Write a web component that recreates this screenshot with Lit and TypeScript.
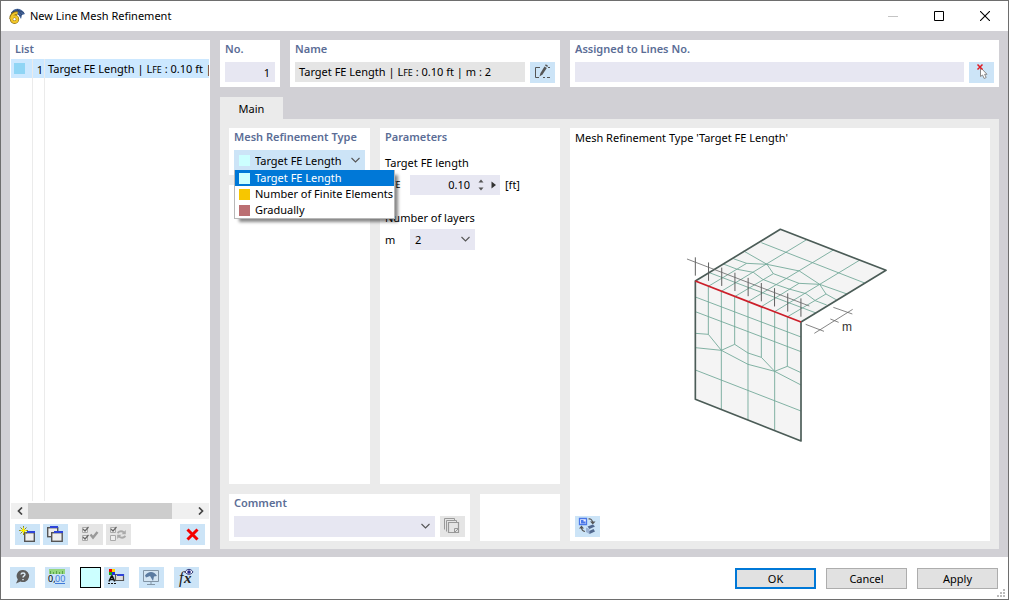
import { LitElement, html, css, svg } from "lit";
import { customElement, state } from "lit/decorators.js";

const chevron = html`<svg class="chevron" width="11" height="7" viewBox="0 0 11 7" aria-hidden="true">
  <path d="M1.500 1l4 4 4-4" fill="none" stroke="#555" stroke-width="1.100" />
</svg>`;

const icon = (body: unknown) =>
  html`<svg width="25" height="21" viewBox="0 0 25 21" aria-hidden="true">${body}</svg>`;

const icons = {
  edit: icon(svg`<path d="M10 5.500H5.500v10H9M13 15.500h2M17 15.500h3M18 5.500h2" fill="none" stroke="#555"/>
    <path d="M9.500 14.500l1-3.500 4-6.500 2.300 1.500-4.300 6.500z" fill="#555"/><path d="M15 3.500l.800-1.200 2.200 1.400-.700 1.300z" fill="#555"/>`),
  pick: icon(svg`<path d="M11.500 5.500v9l2-1.500 1.700 3.500 2-1-1.600-3.200h2.400z" fill="#fff" stroke="#888"/>
    <path d="M8.500 2.500l5 5M13.500 2.500l-5 5" stroke="#e01b24" stroke-width="1.500"/>`),
  create: icon(svg`<rect x="9.700" y="8.700" width="9.600" height="8.600" fill="#eee" stroke="#555" stroke-width="1.400"/>
    <path d="M12 7h8v2h-8z" fill="#2f45d8"/>
    <path d="M8.500 2v9M4 6.500h9M5.500 3.500l6 6M11.500 3.500l-6 6" stroke="#8d8a20" stroke-width="1"/>
    <path d="M8.500 3l1 2.500 2.500 1-2.500 1-1 2.500-1-2.500-2.500-1 2.500-1z" fill="#fff200"/>`),
  copy: icon(svg`<rect x="4.700" y="3.700" width="10" height="9" fill="#eee" stroke="#555" stroke-width="1.400"/>
    <path d="M7 2h8v2H7z" fill="#2f45d8"/>
    <rect x="8.700" y="8.700" width="10.500" height="8.600" fill="#eee" stroke="#555" stroke-width="1.400"/>
    <path d="M11 7h9v2h-9z" fill="#2f45d8"/>`),
  checkAll: icon(svg`<path d="M4.500 3.500h5v5h-5zM4.500 11.500h5v5h-5z" fill="#eee" stroke="#aaa"/>
    <path d="M5 5l2 2 3.500-4M5 13l2 2 3.500-4" fill="none" stroke="#666" stroke-width="1.200"/>
    <path d="M12.500 10.500l2.500 3 4.500-5.500" fill="none" stroke="#999" stroke-width="2.400"/>`),
  toggleAll: icon(svg`<path d="M4.500 3.500h5v5h-5zM4.500 11.500h5v5h-5z" fill="#eee" stroke="#aaa"/>
    <path d="M5 5l2 2 3.500-4" fill="none" stroke="#666" stroke-width="1.200"/>
    <path d="M11.500 9c2-2 4-2.500 6.500-.500M19.500 12c-2 2-4 2.500-6.500.500" fill="none" stroke="#aaa" stroke-width="1.800"/>
    <path d="M19.800 6v4.200h-4.200zM11.200 15v-4.200h4.200z" fill="#aaa"/>`),
  remove: icon(svg`<path d="M7.500 5.500l10 10M17.500 5.500l-10 10" stroke="#f40000" stroke-width="3"/>`),
  library: icon(svg`<path d="M4.500 13.500v-11h10v2M6.500 15.500v-11h10v2" fill="none" stroke="#999"/>
    <path d="M8.500 6.500h10v10h-10z" fill="none" stroke="#999" stroke-width="1.200"/><path d="M14.500 12.500h4v4h-4zM15 16l3-3" fill="none" stroke="#999"/>`),
  view: icon(svg`<path d="M4.500 2.500h7v6h-7z" fill="#eef" stroke="#4a78e8" stroke-width="1.300"/><path d="M6 4h2.500v1.500h2V7.500H6z" fill="#4a78e8"/>
    <path d="M13.500 3c2-.500 3.500.500 4 3M6.500 11c0 3 1 4 3.500 4.500" fill="none" stroke="#555" stroke-width="1.200"/>
    <path d="M15 5.500h5.500l-2.700 3zM4 12.500L6.500 9.500 9 12.500z" fill="#555"/>
    <path d="M12.500 10.500l5.500-2 2 2-5.500 2.500zM13 15.500l5.500-2.500 1.500 2.500-5.500 2.500z" fill="#52698f"/><path d="M11 11.500l3.500 1.500v5l-3.500-2z" fill="#9bb2d4"/>`),
  help: icon(svg`<path d="M13 3a6 6 0 1 1-2.500 11.400L6 16.500l1.800-4A6 6 0 0 1 13 3z" fill="#5d5d5d"/>
    <path d="M11 7.500c.200-2 4-2 4 0 0 1.500-2 1.300-2 3M13 12v1.300" fill="none" stroke="#dcecf8" stroke-width="1.400"/>`),
  units: icon(svg`<path d="M4 2h16v5H4z" fill="#94d67f"/><path d="M5.500 4v3M8.500 5v2M11.500 4v3M14.500 5v2M17.500 4v3" stroke="#5aa548"/>
    <text x="3" y="15" class="glyph">0,</text><text x="10" y="15" class="glyph blue">00</text><path d="M10 16.500h10" stroke="#3f7ad8"/>`),
  display: icon(svg`<path d="M5 2h3v3H5z" fill="#e00"/><path d="M8 2h3v3H8z" fill="#ffd800"/><path d="M5 5h3v3H5z" fill="#18a818"/><path d="M8 5h3v3H8z" fill="#2030e0"/>
    <path d="M5 14.500l2.500-5.500h.700l2.500 5.500M6 12.500h4" fill="none" stroke="#111" stroke-width="1.600"/><path d="M4 16.500h2M7 16.500h2M10 16.500h2" stroke="#111"/>
    <path d="M11.500 7.500h8v6h-8z" fill="#ddd" stroke="#555" stroke-width="1.200"/><path d="M13 7h7v2h-7z" fill="#2f45d8"/>`),
  render: icon(svg`<path d="M4.500 3.500h15v11h-15z" fill="#d4e5f3" stroke="#8295a6"/><path d="M12 14.500v3M8 17.500h8" stroke="#8295a6"/>
    <path d="M6 8.500c3-4.500 9-5 12 .500l-3 .500-1 4.500-3-5-4 1.500z" fill="#5b7ba1"/>`),
  formula: icon(svg`<text x="5" y="16" class="fx">f</text><text x="10" y="16" class="fx x">x</text>
    <path d="M11 5c2-3.500 6-3.500 8 0-2 3-6 3-8 0z" fill="#fff" stroke="#303878"/><circle cx="15" cy="5" r="1.800" fill="#26268a"/>`),
};

const face = [
  "M106 246L423 366M106 290L423 410M106 465L423 588",
  "M106 355L145 358L184 406L224 388L264 414L304 427L344 469L382 454L423 473",
  "M106 398L184 406L264 448L344 469L423 510",
  "M145 214V358M184 229V584M224 245V388M264 260V615M304 275V427M344 290V646M382 305V454",
  "M145 214L260 145M184 229L440 74M224 245L340 176M264 260L520 105M304 275L417 205M344 290L598 136M383 305L498 237",
  "M304 83L614 204M251 108L321 148L418 168L479 208L561 237",
  "M220 131L260 145L321 148L340 176L378 190L417 205L479 208L498 237L530 255",
  "M190 147L232 163L280 172L308 193L349 209L387 222L438 236L466 257L500 270",
  "M148 173L468 294",
].join("");

const ticks = Array.from({ length: 9 }, (_, i) => {
  const x = 106 + 39.6 * i;
  const y = 127 + 15.4 * i;
  return `M${x} ${y}V${y + 55}`;
}).join("");

@customElement("mesh-diagram")
class MeshDiagram extends LitElement {
  static styles = css`
    :host { display: block; }
    svg { display: block; }
    .m { font: 12px "Liberation Sans", sans-serif; fill: #333; }
  `;
  render() {
    return html`<svg width="240" height="240" viewBox="0 0 240 240" role="img" aria-label="Line mesh refinement with m layers">
      <g transform="scale(0.333333)" fill="none">
        <path d="M106 198L361 43L678 166L423 321V678L106 553z" fill="#f4f4f4" />
        <path d=${face} stroke="#6fa797" stroke-width="2.600" />
        <path d="M423 321V678L106 553V198L361 43L678 166z" stroke="#4b5c57" stroke-width="5" stroke-linejoin="round" />
        <path d="M106 198L423 321" stroke="#cc1f2a" stroke-width="5.500" />
        <path d=${ticks} stroke="#555" stroke-width="2.800" />
        <path d="M81 132L448 273M437 328L492 349M520 277L577 297M463 355L578 283M511 312L536 322" stroke="#666" stroke-width="2.400" />
      </g>
      <text class="m" x="182" y="116">m</text>
    </svg>`;
  }
}

@customElement("app-root")
class AppRoot extends LitElement {
  @state() private selected = 0;
  private types = [
    { name: "Target FE Length", color: "#ccffff" },
    { name: "Number of Finite Elements", color: "#f7c600" },
    { name: "Gradually", color: "#bb6f72" },
  ];

  static styles = css`
    :host {
      display: flex;
      flex-direction: column;
      box-sizing: border-box;
      min-height: 100vh;
      border: 1px solid #6e6e6e;
      background: #fff;
      color: #000;
      font: 11px/16px "Noto Sans", sans-serif;
    }
    * { box-sizing: border-box; }
    button, input, select { font: inherit; color: inherit; margin: 0; border: 0; border-radius: 0; padding: 0; }
    svg { display: block; }
    .titlebar { display: flex; align-items: center; height: 30px; padding-left: 8px; }
    .titlebar h1 { flex: 1; margin: 0 0 0 5px; font: inherit; }
    .titlebar button { display: grid; place-items: center; width: 46px; height: 30px; background: none; }
    .body { flex: 1; display: flex; gap: 10px; padding: 9px 9px 8px; background: #d1d0d5; }
    .card { background: #fff; padding: 0 5px 5px; }
    .heading { display: block; height: 22px; margin: 0; font-size: 11px; line-height: 18px; font-weight: 600; color: #5b6d96; white-space: nowrap; }
    .tool { display: grid; place-items: center; flex: none; width: 25px; height: 21px; background: #cce4f7; }
    .tool:disabled { background: #e5e5e5; }
    .swatch { flex: none; width: 11px; height: 11px; }
    .field { height: 20px; background: #e7e7f2; min-width: 0; }

    .list { display: flex; flex-direction: column; width: 200px; padding: 0 0 4px; }
    .list .heading { height: 19px; padding-left: 5px; }
    .rows { flex: 1; width: 198px; margin: 0 1px; table-layout: fixed; border-collapse: separate; border-spacing: 0; }
    .grid { flex: 1; display: flex; }
    .rows td { padding: 0; border-right: 1px solid #ebebeb; overflow: hidden; white-space: nowrap; }
    .rows td:last-child { border: 0; }
    .rows .item { height: 18px; background: #cce8ff; }
    .rows .item td { padding-top: 2px; line-height: 16px; }
    .rows .item td:first-child { padding-top: 0; }
    .rows .item td:nth-child(2) { text-align: right; padding-right: 1px; }
    .rows .item td:nth-child(3) { padding-left: 3px; }
    .rows .swatch { background: #8fd5f5; margin-left: 3px; }
    .c1 { width: 22px; }
    .c2 { width: 12px; }
    .small { font-size: 9px; }
    .scroll { display: flex; height: 16px; margin: 2px 1px 5px; background: #f0f0f0; }
    .scroll button { display: grid; place-items: center; width: 17px; background: none; }
    .track { flex: 1; }
    .thumb { width: 88%; height: 16px; background: #cdcdcd; }
    .tools { display: flex; gap: 3px; padding: 0 5px; }
    .gap { margin-left: 7px; }
    .push { margin-left: auto; }

    .right { flex: 1; min-width: 0; display: flex; flex-direction: column; }
    .top { display: flex; gap: 10px; margin-bottom: 10px; }
    .no { width: 60px; }
    .no input { display: block; width: 100%; text-align: right; padding-right: 5px; }
    .name { width: 270px; }
    .assigned { flex: 1; }
    .line { display: flex; gap: 5px; }
    .line .field { flex: 1; }
    .top .line { height: 20px; }
    .readonly { background: #e5e5e5; padding-left: 4px; line-height: 20px; white-space: nowrap; overflow: hidden; }
    .tab { align-self: flex-start; width: 63px; height: 22px; padding-top: 2px; background: #ebebeb; }
    .pane { flex: 1; display: flex; gap: 10px; padding: 9px 9px 8px; background: #ebebeb; }
    .left { width: 331px; display: flex; flex-direction: column; gap: 10px; }
    .upper { flex: 1; display: flex; gap: 10px; }
    .typecol { width: 141px; display: flex; flex-direction: column; gap: 10px; }
    .type { position: relative; height: 47px; }
    .blank { flex: 1; }
    .pick { position: relative; display: flex; align-items: center; height: 21px; background: #e7e7f2; }
    .pick select { flex: 1; min-width: 0; height: 21px; appearance: none; background: none; padding-left: 5px; outline: 0; }
    .pick .chevron { position: absolute; right: 4px; top: 7px; pointer-events: none; }
    .pick.open { background: #cce4f7; padding-left: 5px; }
    .menu { position: absolute; z-index: 2; top: 42px; left: 5px; margin: 0; padding: 0; width: max-content; min-width: 161px; background: #fff; border: 1px solid #b8b8b8; border-top: 0; box-shadow: 4px 4px 3px -1px #0007; list-style: none; }
    .menu li { display: flex; align-items: center; gap: 5px; height: 16px; padding: 0 1px 0 4px; white-space: nowrap; }
    .menu li.on { background: #0078d7; color: #fff; }
    .params { flex: 1; padding-bottom: 0; }
    .params .label { display: block; margin-top: 5px; height: 19px; }
    .row { display: flex; align-items: center; height: 21px; }
    .row > label { width: 25px; }
    .number { display: flex; align-items: center; width: 90px; height: 20px; background: #e7e7f2; margin-right: 5px; }
    .number input { width: 60px; background: none; text-align: right; }
    .number svg { margin-left: 8px; }
    .params .second { margin-top: 15px; }
    .layers { width: 65px; }
    .lower { display: flex; gap: 10px; }
    .comment { width: 241px; height: 47px; }
    .comment .pick { flex: 1; }
    .preview { flex: 1; display: flex; flex-direction: column; padding-bottom: 4px; }
    .preview p { margin: 2px 0 0; }
    .canvas { flex: 1; display: grid; place-items: center; padding-top: 8px; }

    .footer { display: flex; align-items: flex-start; height: 42px; padding: 10px 10px 0 9px; position: relative; }
    .footer .tool + .tool { margin-left: 10px; }
    .color { width: 21px; height: 21px; margin: 0 3px 0 10px; border: 1px solid #000; background: #ccffff; }
    .actions { display: flex; gap: 10px; margin: 1px 0 0 auto; }
    .actions button { width: 81px; height: 21px; background: #e1e1e1; border: 1px solid #adadad; }
    .actions .default { border: 2px solid #0078d7; }
    .grip { position: absolute; right: 3px; bottom: 2px; }
    .glyph { font: 9px "Noto Sans", sans-serif; }
    .blue { fill: #3f7ad8; }
    .fx { font: italic 16px "Liberation Serif", serif; fill: #222; }
    .fx.x { font-weight: bold; font-size: 15px; }
  `;

  private onType(e: Event) {
    this.selected = (e.target as HTMLSelectElement).selectedIndex;
  }

  private tool(label: string, body: unknown, cls = "", disabled = false) {
    return html`<button class="tool ${cls}" aria-label=${label} title=${label} ?disabled=${disabled}>${body}</button>`;
  }

  render() {
    const current = this.types[this.selected];
    const title = html`Target FE Length | L<span class="small">FE</span> : 0.10 ft | m : 2`;
    return html`
      <header class="titlebar">
        <svg width="16" height="16" viewBox="0 0 16 16" aria-hidden="true">
          <path d="M2 5C5-.500 12-1 16 6l-3 1-1 4-3-5-6 2z" fill="#45669c" />
          <path d="M4 3l8 5M8 1l5 6M2 5c4-3 9-3 13 0" stroke="#22375d" stroke-width=".700" fill="none" />
          <path d="M8.500 5C4 4.500 2 7.500 2 11" fill="none" stroke="#8a6d14" stroke-width="3.400" />
          <circle cx="5.500" cy="11.200" r="3" fill="none" stroke="#8a6d14" stroke-width="3.400" />
          <path d="M8.500 5C4.500 5 2.200 7.500 2.200 11" fill="none" stroke="#f2c628" stroke-width="2.200" />
          <circle cx="5.500" cy="11.200" r="2.900" fill="none" stroke="#f2c628" stroke-width="2.200" />
        </svg>
        <h1>New Line Mesh Refinement</h1>
        <button aria-label="Minimize" disabled><svg width="10" height="10"><path d="M0 5.500h10" stroke="#c4c4c4" /></svg></button>
        <button aria-label="Maximize"><svg width="10" height="10"><path d="M.500.500h9v9h-9z" fill="none" stroke="#000" /></svg></button>
        <button aria-label="Close"><svg width="10" height="10"><path d="M0 0l10 10M10 0L0 10" stroke="#000" stroke-width="1.100" /></svg></button>
      </header>
      <main class="body">
        <section class="card list">
          <h2 class="heading">List</h2>
          <div class="grid">
            <table class="rows">
              <colgroup><col class="c1" /><col class="c2" /><col /></colgroup>
              <tbody>
                <tr class="item"><td><div class="swatch"></div></td><td>1</td><td>${title}</td></tr>
                <tr><td></td><td></td><td></td></tr>
              </tbody>
            </table>
          </div>
          <div class="scroll">
            <button aria-label="Scroll left"><svg width="6" height="8"><path d="M5 .500L1.500 4 5 7.500" fill="none" stroke="#444" stroke-width="1.700" /></svg></button>
            <div class="track"><div class="thumb"></div></div>
            <button aria-label="Scroll right"><svg width="6" height="8"><path d="M1 .500L4.500 4 1 7.500" fill="none" stroke="#444" stroke-width="1.700" /></svg></button>
          </div>
          <div class="tools">
            ${this.tool("New", icons.create)} ${this.tool("Copy", icons.copy)}
            ${this.tool("Select all", icons.checkAll, "gap", true)} ${this.tool("Invert selection", icons.toggleAll, "", true)}
            ${this.tool("Delete", icons.remove, "push")}
          </div>
        </section>
        <div class="right">
          <div class="top">
            <div class="card no">
              <label class="heading" for="no">No.</label>
              <input class="field" id="no" value="1" />
            </div>
            <div class="card name">
              <span class="heading" id="name">Name</span>
              <div class="line">
                <div class="field readonly" role="textbox" aria-readonly="true" aria-labelledby="name">${title}</div>
                ${this.tool("Edit name", icons.edit)}
              </div>
            </div>
            <div class="card assigned">
              <label class="heading" for="lines">Assigned to Lines No.</label>
              <div class="line"><input class="field" id="lines" />${this.tool("Select lines", icons.pick)}</div>
            </div>
          </div>
          <button class="tab" role="tab" aria-selected="true">Main</button>
          <div class="pane">
            <div class="left">
              <div class="upper">
                <div class="typecol">
                  <div class="card type">
                    <label class="heading" for="type">Mesh Refinement Type</label>
                    <div class="pick open">
                      <span class="swatch" style="background:${current.color}"></span>
                      <select id="type" @change=${this.onType}>
                        ${this.types.map((t) => html`<option>${t.name}</option>`)}
                      </select>
                      ${chevron}
                    </div>
                    <ul class="menu" role="listbox" aria-label="Mesh Refinement Type">
                      ${this.types.map(
                        (t, i) => html`<li class=${i === this.selected ? "on" : ""} role="option" aria-selected=${i === this.selected}>
                          <span class="swatch" style="background:${t.color}"></span>${t.name}
                        </li>`
                      )}
                    </ul>
                  </div>
                  <div class="card blank"></div>
                </div>
                <div class="card params">
                  <h2 class="heading">Parameters</h2>
                  <span class="label">Target FE length</span>
                  <div class="row">
                    <label for="lfe">L<span class="small">FE</span></label>
                    <div class="number">
                      <input id="lfe" value="0.10" />
                      <svg width="20" height="12" viewBox="0 0 20 12" aria-hidden="true"><path d="M.500 3.500L3 .500l2.500 3zM.500 8.500L3 11.500l2.500-3z" fill="#555" /><path d="M13.500 2.500v7L18 6z" fill="#333" /></svg>
                    </div>
                    <span>[ft]</span>
                  </div>
                  <span class="label second">Number of layers</span>
                  <div class="row">
                    <label for="m">m</label>
                    <div class="pick layers">
                      <select id="m"><option>2</option></select>
                      ${chevron}
                    </div>
                  </div>
                </div>
              </div>
              <div class="lower">
                <div class="card comment">
                  <label class="heading" for="comment">Comment</label>
                  <div class="line">
                    <div class="pick"><select id="comment"><option></option></select>${chevron}</div>
                    ${this.tool("Comment library", icons.library, "", true)}
                  </div>
                </div>
                <div class="card blank"></div>
              </div>
            </div>
            <section class="card preview">
              <p>Mesh Refinement Type 'Target FE Length'</p>
              <div class="canvas"><mesh-diagram></mesh-diagram></div>
              ${this.tool("Switch view", icons.view)}
            </section>
          </div>
        </div>
      </main>
      <footer class="footer">
        ${this.tool("Help", icons.help)} ${this.tool("Units and decimals", icons.units)}
        <button class="color" aria-label="Color"></button>
        ${this.tool("Display properties", icons.display)} ${this.tool("Visibility", icons.render)} ${this.tool("Formula", icons.formula)}
        <div class="actions">
          <button class="default">OK</button>
          <button>Cancel</button>
          <button>Apply</button>
        </div>
        <svg class="grip" width="8" height="8" aria-hidden="true"><path d="M6 0h2v2H6zM3 3h2v2H3zM6 3h2v2H6zM0 6h2v2H0zM3 6h2v2H3zM6 6h2v2H6z" fill="#bbb" /></svg>
      </footer>
    `;
  }
}
